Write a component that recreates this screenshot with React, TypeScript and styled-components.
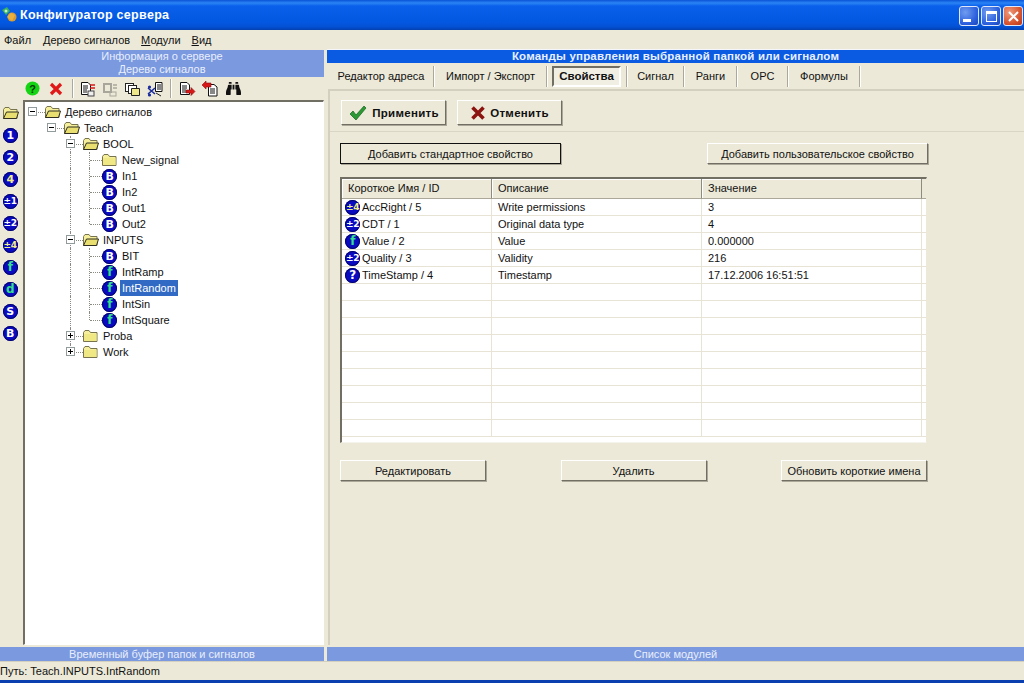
import React from 'react';
import styled, { createGlobalStyle } from 'styled-components';
import { FaBinoculars } from 'react-icons/fa';

const GlobalStyle = createGlobalStyle`
  html, body {
    margin: 0;
    padding: 0;
    background: #ece9d8;
  }
  * {
    box-sizing: border-box;
  }
`;

const Window = styled.div`
  width: 1024px;
  height: 683px;
  overflow: hidden;
  display: flex;
  flex-direction: column;
  background: #ece9d8;
  color: #111;
  font-family: 'Liberation Sans', 'Noto Sans', sans-serif;
  font-size: 11px;
`;

const TitleBar = styled.div`
  height: 30px;
  flex: none;
  display: flex;
  align-items: center;
  padding: 0 1px 0 1px;
  background: linear-gradient(180deg, #0a53d8 0, #2a85f5 3px, #0a60ea 6px, #0358e2 22px, #0350d2 27px, #0340b0 30px);
`;

const TitleText = styled.div`
  margin-left: 1px;
  color: #fff;
  font-size: 12.5px;
  font-weight: 700;
  letter-spacing: 0.3px;
  flex: 1;
`;

const CaptionButtons = styled.div`
  display: flex;
  gap: 2px;
  margin-top: 2px;
`;

const CaptionButton = styled.div<{ $close?: boolean }>`
  width: 20px;
  height: 20px;
  border: 1px solid #dfe8fb;
  border-radius: 3px;
  display: flex;
  align-items: center;
  justify-content: center;
  background: ${(p) =>
    p.$close
      ? 'radial-gradient(circle at 30% 30%, #ef9a7c, #d5512b 65%, #b8371a)'
      : 'radial-gradient(circle at 30% 30%, #6f9cf0, #2b5fdc 65%, #1c44b8)'};
`;

const MinGlyph = styled.div`
  width: 8px;
  height: 3px;
  background: #fff;
  margin: 8px 4px 0 0;
`;

const MaxGlyph = styled.div`
  width: 11px;
  height: 11px;
  border: 1px solid #fff;
  border-top-width: 3px;
`;

const MenuBar = styled.div`
  height: 20px;
  flex: none;
  display: flex;
  align-items: center;
  padding-left: 4px;
`;

const MenuItem = styled.span<{ $gap: number }>`
  margin-right: ${(p) => p.$gap}px;
  u {
    text-underline-offset: 1px;
  }
`;

const Main = styled.div`
  flex: 1;
  min-height: 0;
  display: flex;
  gap: 3px;
`;

const LeftColumn = styled.div`
  width: 324px;
  flex: none;
  display: flex;
  flex-direction: column;
`;

const RightColumn = styled.div`
  flex: 1;
  min-width: 0;
  display: flex;
  flex-direction: column;
`;

const PaleHeader = styled.div`
  height: 27px;
  flex: none;
  background: #7b99df;
  color: #e8eefc;
  text-align: center;
  line-height: 13px;
`;

const PaleFooter = styled.div`
  height: 14px;
  flex: none;
  background: #7b99df;
  color: #e8eefc;
  text-align: center;
  line-height: 14px;
  margin-top: 2px;
`;

const Toolbar = styled.div`
  height: 23px;
  flex: none;
  display: flex;
  align-items: center;
  padding-left: 25px;
`;

const ToolIcon = styled.div<{ $w: number }>`
  width: ${(p) => p.$w}px;
  height: 18px;
  flex: none;
  display: flex;
  align-items: center;
  justify-content: center;
`;

const ToolSep = styled.div`
  width: 2px;
  height: 19px;
  flex: none;
  border-left: 1px solid #aca899;
  border-right: 1px solid #fff;
  margin-right: 5px;
`;

const LeftBody = styled.div`
  flex: 1;
  min-height: 0;
  display: flex;
`;

const Palette = styled.div`
  width: 23px;
  flex: none;
  display: flex;
  flex-direction: column;
  align-items: center;
  gap: 4px;
  padding: 4px 3px 0 0;
`;

const PaletteSlot = styled.div`
  height: 18px;
  display: flex;
  align-items: center;
  justify-content: center;
`;

const TreePanel = styled.div`
  flex: 1;
  min-width: 0;
  background: #fff;
  border: 1px solid #fff;
  border-top: 2px solid #716f64;
  border-left: 2px solid #716f64;
  padding-top: 2px;
`;

const TreeRow = styled.div`
  height: 16px;
  display: flex;
  align-items: stretch;
  margin-left: -1px;
`;

const Cell = styled.div`
  width: 19px;
  flex: none;
  position: relative;
`;

const VLine = styled.div<{ $half?: boolean }>`
  position: absolute;
  left: 8px;
  top: 0;
  height: ${(p) => (p.$half ? '8px' : '16px')};
  border-left: 1px dotted #8a8a80;
`;

const HStub = styled.div`
  position: absolute;
  left: 9px;
  top: 8px;
  width: 12px;
  border-top: 1px dotted #8a8a80;
`;

const Expander = styled.div`
  position: absolute;
  left: 4px;
  top: 3px;
  width: 9px;
  height: 9px;
  background: #fff;
  border: 1px solid #919b9c;
  color: #000;

  &::before {
    content: '';
    position: absolute;
    left: 1px;
    top: 3px;
    width: 5px;
    height: 1px;
    background: #000;
  }
`;

const ExpanderPlus = styled(Expander)`
  &::after {
    content: '';
    position: absolute;
    left: 3px;
    top: 1px;
    width: 1px;
    height: 5px;
    background: #000;
  }
`;

const IconCell = styled.div`
  width: 19px;
  flex: none;
  display: flex;
  align-items: center;
  justify-content: center;
  position: relative;
`;

const TreeLabel = styled.div<{ $selected?: boolean }>`
  margin-left: 1px;
  padding: 0 2px;
  line-height: 16px;
  white-space: nowrap;
  background: ${(p) => (p.$selected ? '#316ac5' : 'transparent')};
  color: ${(p) => (p.$selected ? '#fff' : '#111')};
`;

const Disc = styled.span<{ $green?: boolean; $size?: number; $yellow?: boolean }>`
  display: inline-flex;
  align-items: center;
  justify-content: center;
  width: 15px;
  height: 15px;
  flex: none;
  border-radius: 50%;
  background: #0a0ac0;
  box-shadow: inset 0 0 0 1px #05056e;
  color: ${(p) => (p.$green ? '#35e08a' : p.$yellow ? '#f2ee8a' : '#fff')};
  font-family: 'DejaVu Sans', sans-serif;
  font-weight: 700;
  font-size: ${(p) => p.$size ?? 11}px;
  line-height: 1;
  letter-spacing: -0.5px;
`;

const HeaderBar = styled.div`
  height: 13px;
  flex: none;
  background: #0a5ae2;
  color: #e8f0ff;
  font-weight: 700;
  font-size: 11.5px;
  line-height: 13px;
  text-align: center;
  letter-spacing: 0.2px;
  box-shadow: 0 -1px 0 #f4f6fb;
`;

const TabStrip = styled.div`
  height: 26px;
  flex: none;
  display: flex;
  align-items: center;
  padding-left: 2px;
`;

const Tab = styled.div<{ $w: number; $active?: boolean }>`
  width: ${(p) => p.$w}px;
  height: 21px;
  flex: none;
  display: flex;
  align-items: center;
  justify-content: center;
  font-weight: ${(p) => (p.$active ? 700 : 400)};
  font-size: ${(p) => (p.$active ? '11.5px' : '11px')};
  background: ${(p) => (p.$active ? '#f1efe4' : 'transparent')};
  border: ${(p) => (p.$active ? '2px solid' : 'none')};
  border-color: #716f64 #fff #fff #716f64;
`;

const TabSep = styled.div<{ $l: number; $r: number }>`
  width: 2px;
  height: 21px;
  flex: none;
  border-left: 1px solid #aca899;
  border-right: 1px solid #fff;
  margin: 0 ${(p) => p.$r}px 0 ${(p) => p.$l}px;
`;

const TabPage = styled.div`
  flex: 1;
  min-height: 0;
  border-top: 2px solid #d4d0c0;
  border-left: 2px solid #d4d0c0;
  margin-left: 1px;
  display: flex;
  flex-direction: column;
`;

const ActionRow = styled.div`
  height: 41px;
  flex: none;
  padding: 9px 0 0 11px;
  display: flex;
  gap: 11px;
  border-bottom: 1px solid #d9d6c6;
`;

const BaseButton = styled.div`
  display: flex;
  align-items: center;
  justify-content: center;
  flex: none;
  background: #ece9d8;
  border: 1px solid;
  border-color: #fff #716f64 #716f64 #fff;
  box-shadow: 1px 1px 0 #aca899;
  white-space: nowrap;
`;

const ActionButton = styled(BaseButton)`
  width: 105px;
  height: 25px;
  gap: 4px;
  font-weight: 700;
  font-size: 11.5px;
  letter-spacing: 0.3px;
`;

const AddRow = styled.div`
  margin: 11px 96px 0 10px;
  display: flex;
  justify-content: space-between;
`;

const WideButton = styled(BaseButton)<{ $focus?: boolean }>`
  width: 221px;
  height: 21px;
  border-color: ${(p) => (p.$focus ? '#111' : '#fff #716f64 #716f64 #fff')};
`;

const Table = styled.div`
  margin: 13px 97px 0 10px;
  height: 266px;
  background: #fff;
  border-top: 2px solid #716f64;
  border-left: 2px solid #716f64;
  border-right: 1px solid #ece9d8;
  border-bottom: 1px solid #f4f3ec;
  overflow: hidden;
`;

const TableRow = styled.div`
  display: grid;
  grid-template-columns: 150px 210px 220px 1fr;
`;

const HeadCell = styled.div`
  height: 20px;
  line-height: 18px;
  padding-left: 6px;
  background: #ece9d8;
  border-bottom: 1px solid #aca899;
  border-right: 1px solid #8d8b7f;
  box-shadow: inset 1px 1px 0 #fff;
`;

const HeadGap = styled.div`
  height: 20px;
  background: #ece9d8;
  border-bottom: 1px solid #aca899;
`;

const DataCell = styled.div`
  height: 17px;
  line-height: 17px;
  padding-left: 6px;
  border-right: 1px solid #e7e4d6;
  border-bottom: 1px solid #e7e4d6;
  white-space: nowrap;
  display: flex;
  align-items: center;
`;

const NameCell = styled(DataCell)`
  padding-left: 3px;
  gap: 2px;
`;

const BottomRow = styled.div`
  margin: 17px 97px 0 10px;
  display: flex;
  justify-content: space-between;
`;

const BottomButton = styled(BaseButton)`
  width: 146px;
  height: 21px;
`;

const PageSpacer = styled.div`
  flex: 1;
`;

const StatusBar = styled.div`
  height: 19px;
  flex: none;
  display: flex;
  align-items: center;
  border-top: 1px solid #d4d0c0;
`;

const BottomEdge = styled.div`
  height: 3px;
  flex: none;
  background: #0a3fb0;
`;

const Folder = ({ open }: { open?: boolean }) => (
  <svg width="17" height="14" viewBox="0 0 17 14">
    <path d="M1.5 3.5 L3 1.5 H7 L8.5 3.5 H15 V12.5 H1.5 Z" fill="#f5ef9c" stroke="#77734c" />
    {open ? (
      <path d="M1.5 12.5 L4.5 6 H16.5 L14.5 12.5 Z" fill="#e8df70" stroke="#2f2e20" />
    ) : (
      <path d="M2 5 H14.5 V12 H2 Z" fill="#f0e884" />
    )}
  </svg>
);

const LeafDisc = ({ kind }: { kind: 'B' | 'f' }) => (
  <Disc $green={kind === 'f'} $size={kind === 'f' ? 12 : 11}>
    {kind}
  </Disc>
);

type Guide = 'none' | 'line' | 'tee' | 'ell' | 'minus' | 'minusLine' | 'plusLine' | 'plusEnd';

const GuideCell = ({ g }: { g: Guide }) => (
  <Cell>
    {(g === 'line' || g === 'tee' || g === 'minusLine' || g === 'plusLine') && <VLine />}
    {(g === 'ell' || g === 'plusEnd') && <VLine $half />}
    {g !== 'none' && g !== 'line' && <HStub />}
    {(g === 'minus' || g === 'minusLine') && <Expander />}
    {(g === 'plusLine' || g === 'plusEnd') && <ExpanderPlus />}
  </Cell>
);

type Node = {
  guides: Guide[];
  icon: 'open' | 'closed' | 'B' | 'f';
  label: string;
  selected?: boolean;
};

const tree: Node[] = [
  { guides: ['minus'], icon: 'open', label: 'Дерево сигналов' },
  { guides: ['none', 'minus'], icon: 'open', label: 'Teach' },
  { guides: ['none', 'none', 'minusLine'], icon: 'open', label: 'BOOL' },
  { guides: ['none', 'none', 'line', 'tee'], icon: 'closed', label: 'New_signal' },
  { guides: ['none', 'none', 'line', 'tee'], icon: 'B', label: 'In1' },
  { guides: ['none', 'none', 'line', 'tee'], icon: 'B', label: 'In2' },
  { guides: ['none', 'none', 'line', 'tee'], icon: 'B', label: 'Out1' },
  { guides: ['none', 'none', 'line', 'ell'], icon: 'B', label: 'Out2' },
  { guides: ['none', 'none', 'minusLine'], icon: 'open', label: 'INPUTS' },
  { guides: ['none', 'none', 'line', 'tee'], icon: 'B', label: 'BIT' },
  { guides: ['none', 'none', 'line', 'tee'], icon: 'f', label: 'IntRamp' },
  { guides: ['none', 'none', 'line', 'tee'], icon: 'f', label: 'IntRandom', selected: true },
  { guides: ['none', 'none', 'line', 'tee'], icon: 'f', label: 'IntSin' },
  { guides: ['none', 'none', 'line', 'ell'], icon: 'f', label: 'IntSquare' },
  { guides: ['none', 'none', 'plusLine'], icon: 'closed', label: 'Proba' },
  { guides: ['none', 'none', 'plusEnd'], icon: 'closed', label: 'Work' },
];

const palette = [
  { t: '1' },
  { t: '2' },
  { t: '4', yellow: true },
  { t: '±1', size: 9 },
  { t: '±2', size: 9 },
  { t: '±4', size: 9, yellow: true },
  { t: 'f', green: true, size: 12 },
  { t: 'd', green: true, size: 12 },
  { t: 'S' },
  { t: 'B' },
];

const props = [
  { icon: '±4', yellow: true, name: 'AccRight / 5', desc: 'Write permissions', value: '3' },
  { icon: '±2', name: 'CDT / 1', desc: 'Original data type', value: '4' },
  { icon: 'f', green: true, name: 'Value / 2', desc: 'Value', value: '0.000000' },
  { icon: '±2', name: 'Quality / 3', desc: 'Validity', value: '216' },
  { icon: '?', name: 'TimeStamp / 4', desc: 'Timestamp', value: '17.12.2006 16:51:51' },
];

const Doc = ({ children }: { children?: React.ReactNode }) => (
  <svg width="18" height="16" viewBox="0 0 18 16">
    <path d="M2.5 1.5 H9 L11.5 4 V13.5 H2.5 Z" fill="#fff" stroke="#111" />
    <path d="M4 5 H9 M4 7 H9 M4 9 H8 M4 11 H8" stroke="#111" />
    {children}
  </svg>
);

const ArrowIn = () => (
  <Doc>
    <path d="M8 9 H13 V6.5 L17 10.5 L13 14.5 V12 H8 Z" fill="#d81818" stroke="#8a1010" strokeWidth="0.6" />
  </Doc>
);

const ArrowOut = () => (
  <svg width="18" height="16" viewBox="0 0 18 16">
    <path d="M7.5 3.5 H13 L16 6 V15 H7.5 Z" fill="#fff" stroke="#111" />
    <path d="M9 8 H14 M9 10 H14 M9 12 H14" stroke="#111" />
    <path d="M10 2 H5 V0 L1 4 L5 8 V6 H10 Z" fill="#d81818" stroke="#8a1010" strokeWidth="0.6" />
  </svg>
);

const App = () => {
  return (
    <Window>
      <GlobalStyle />
      <TitleBar>
        <svg width="18" height="18" viewBox="0 0 18 18">
          <circle cx="11" cy="11" r="4.5" fill="#d89a30" />
          <path d="M1 4 L6 1 L9 5 L5 9 Z" fill="#38b060" />
          <path d="M6 11 L10 7 L14 9 L11 15 Z" fill="#e8b040" />
          <circle cx="5" cy="5" r="1.5" fill="#bff0c0" />
        </svg>
        <TitleText>Конфигуратор сервера</TitleText>
        <CaptionButtons>
          <CaptionButton>
            <MinGlyph />
          </CaptionButton>
          <CaptionButton>
            <MaxGlyph />
          </CaptionButton>
          <CaptionButton $close>
            <svg width="13" height="13" viewBox="0 0 13 13">
              <path d="M2 2 L11 11 M11 2 L2 11" stroke="#fff" strokeWidth="2" />
            </svg>
          </CaptionButton>
        </CaptionButtons>
      </TitleBar>

      <MenuBar>
        <MenuItem $gap={12}>Файл</MenuItem>
        <MenuItem $gap={11}>
          <u>Д</u>ерево сигналов
        </MenuItem>
        <MenuItem $gap={11}>
          <u>М</u>одули
        </MenuItem>
        <MenuItem $gap={0}>
          <u>В</u>ид
        </MenuItem>
      </MenuBar>

      <Main>
        <LeftColumn>
          <PaleHeader>
            Информация о сервере
            <br />
            Дерево сигналов
          </PaleHeader>
          <Toolbar>
            <ToolIcon $w={15}>
              <svg width="15" height="15" viewBox="0 0 15 15">
                <circle cx="7.5" cy="7.5" r="7" fill="#14d414" />
                <text x="7.5" y="11.5" textAnchor="middle" fontSize="11" fontWeight="700" fontFamily="Liberation Sans" fill="#063806">
                  ?
                </text>
              </svg>
            </ToolIcon>
            <ToolIcon $w={32}>
              <svg width="14" height="14" viewBox="0 0 14 14">
                <path d="M2 2 L12 12 M12 2 L2 12" stroke="#e01818" strokeWidth="3.2" />
              </svg>
            </ToolIcon>
            <ToolSep />
            <ToolIcon $w={18}>
              <Doc>
                <path d="M11 4 H16 M11 7 H16" stroke="#d81818" strokeWidth="1.4" />
                <rect x="9" y="10" width="6" height="5" fill="#eee" stroke="#444" />
              </Doc>
            </ToolIcon>
            <ToolIcon $w={26}>
              <svg width="18" height="16" viewBox="0 0 18 16">
                <rect x="2" y="2" width="9" height="10" fill="#a8a69a" />
                <rect x="4" y="4" width="5" height="6" fill="#ece9d8" />
                <path d="M12 4 H16 M12 7 H16" stroke="#a8a69a" strokeWidth="1.4" />
                <rect x="9" y="11" width="6" height="4" fill="none" stroke="#a8a69a" />
              </svg>
            </ToolIcon>
            <ToolIcon $w={19}>
              <svg width="18" height="16" viewBox="0 0 18 16">
                <rect x="1.5" y="2.5" width="8" height="8" fill="#fff" stroke="#222" />
                <rect x="4.5" y="4.5" width="8" height="8" fill="#fff" stroke="#222" />
                <path d="M7.5 7.5 H15.5 V14.5 H7.5 Z" fill="#efe88a" stroke="#222" />
              </svg>
            </ToolIcon>
            <ToolIcon $w={28}>
              <svg width="18" height="16" viewBox="0 0 18 16">
                <path d="M8.5 1.5 H15 V10.5 H8.5 Z" fill="#fff" stroke="#111" />
                <path d="M10 4 H14 M10 6 H14 M10 8 H14" stroke="#111" />
                <path d="M1 13 L8 7 M1 7 L8 13" stroke="#1a2ba0" strokeWidth="1.6" />
                <circle cx="2.5" cy="14" r="1.6" fill="#1a2ba0" />
                <circle cx="2.5" cy="6" r="1.6" fill="#1a2ba0" />
                <path d="M9 12 L14 15" stroke="#222" />
              </svg>
            </ToolIcon>
            <ToolSep />
            <ToolIcon $w={19}>
              <ArrowIn />
            </ToolIcon>
            <ToolIcon $w={27}>
              <ArrowOut />
            </ToolIcon>
            <ToolIcon $w={20}>
              <FaBinoculars size={15} color="#111" />
            </ToolIcon>
          </Toolbar>
          <LeftBody>
            <Palette>
              <PaletteSlot>
                <Folder open />
              </PaletteSlot>
              {palette.map((p) => (
                <PaletteSlot key={p.t}>
                  <Disc $green={p.green} $yellow={p.yellow} $size={p.size}>
                    {p.t}
                  </Disc>
                </PaletteSlot>
              ))}
            </Palette>
            <TreePanel>
              {tree.map((n) => (
                <TreeRow key={n.label}>
                  {n.guides.map((g, i) => (
                    <GuideCell key={i} g={g} />
                  ))}
                  <IconCell>
                    {n.icon === 'open' && <Folder open />}
                    {n.icon === 'closed' && <Folder />}
                    {(n.icon === 'B' || n.icon === 'f') && <LeafDisc kind={n.icon} />}
                  </IconCell>
                  <TreeLabel $selected={n.selected}>{n.label}</TreeLabel>
                </TreeRow>
              ))}
            </TreePanel>
          </LeftBody>
          <PaleFooter>Временный буфер папок и сигналов</PaleFooter>
        </LeftColumn>

        <RightColumn>
          <HeaderBar>Команды управления выбранной папкой или сигналом</HeaderBar>
          <TabStrip>
            <Tab $w={104}>Редактор адреса</Tab>
            <TabSep $l={0} $r={0} />
            <Tab $w={111}>Импорт / Экспорт</Tab>
            <TabSep $l={0} $r={4} />
            <Tab $w={69} $active>
              Свойства
            </Tab>
            <TabSep $l={5} $r={0} />
            <Tab $w={55}>Сигнал</Tab>
            <TabSep $l={0} $r={0} />
            <Tab $w={51}>Ранги</Tab>
            <TabSep $l={0} $r={0} />
            <Tab $w={49}>OPC</Tab>
            <TabSep $l={0} $r={0} />
            <Tab $w={70}>Формулы</Tab>
            <TabSep $l={0} $r={0} />
          </TabStrip>
          <TabPage>
            <ActionRow>
              <ActionButton>
                <svg width="20" height="18" viewBox="0 0 20 18">
                  <path d="M2 10 L5 7 L8 11 L16 2 L18 4 L8 16 Z" fill="#2c9a34" stroke="#14601c" strokeWidth="0.7" />
                </svg>
                Применить
              </ActionButton>
              <ActionButton>
                <svg width="16" height="16" viewBox="0 0 16 16">
                  <path d="M2.5 2.5 L13.5 13.5 M13.5 2.5 L2.5 13.5" stroke="#8c1410" strokeWidth="3.6" />
                </svg>
                Отменить
              </ActionButton>
            </ActionRow>
            <AddRow>
              <WideButton $focus>Добавить стандартное свойство</WideButton>
              <WideButton>Добавить пользовательское свойство</WideButton>
            </AddRow>
            <Table>
              <TableRow>
                <HeadCell>Короткое Имя / ID</HeadCell>
                <HeadCell>Описание</HeadCell>
                <HeadCell>Значение</HeadCell>
                <HeadGap />
              </TableRow>
              {Array.from({ length: 14 }).map((_, i) => {
                const p = props[i];
                return (
                  <TableRow key={i}>
                    <NameCell>
                      {p && (
                        <Disc $green={p.green} $yellow={p.yellow} $size={p.icon.length > 1 ? 9 : 12}>
                          {p.icon}
                        </Disc>
                      )}
                      {p?.name}
                    </NameCell>
                    <DataCell>{p?.desc}</DataCell>
                    <DataCell>{p?.value}</DataCell>
                    <DataCell />
                  </TableRow>
                );
              })}
            </Table>
            <BottomRow>
              <BottomButton>Редактировать</BottomButton>
              <BottomButton>Удалить</BottomButton>
              <BottomButton>Обновить короткие имена</BottomButton>
            </BottomRow>
            <PageSpacer />
          </TabPage>
          <PaleFooter>Список модулей</PaleFooter>
        </RightColumn>
      </Main>

      <StatusBar>Путь: Teach.INPUTS.IntRandom</StatusBar>
      <BottomEdge />
    </Window>
  );
};

export default App;
